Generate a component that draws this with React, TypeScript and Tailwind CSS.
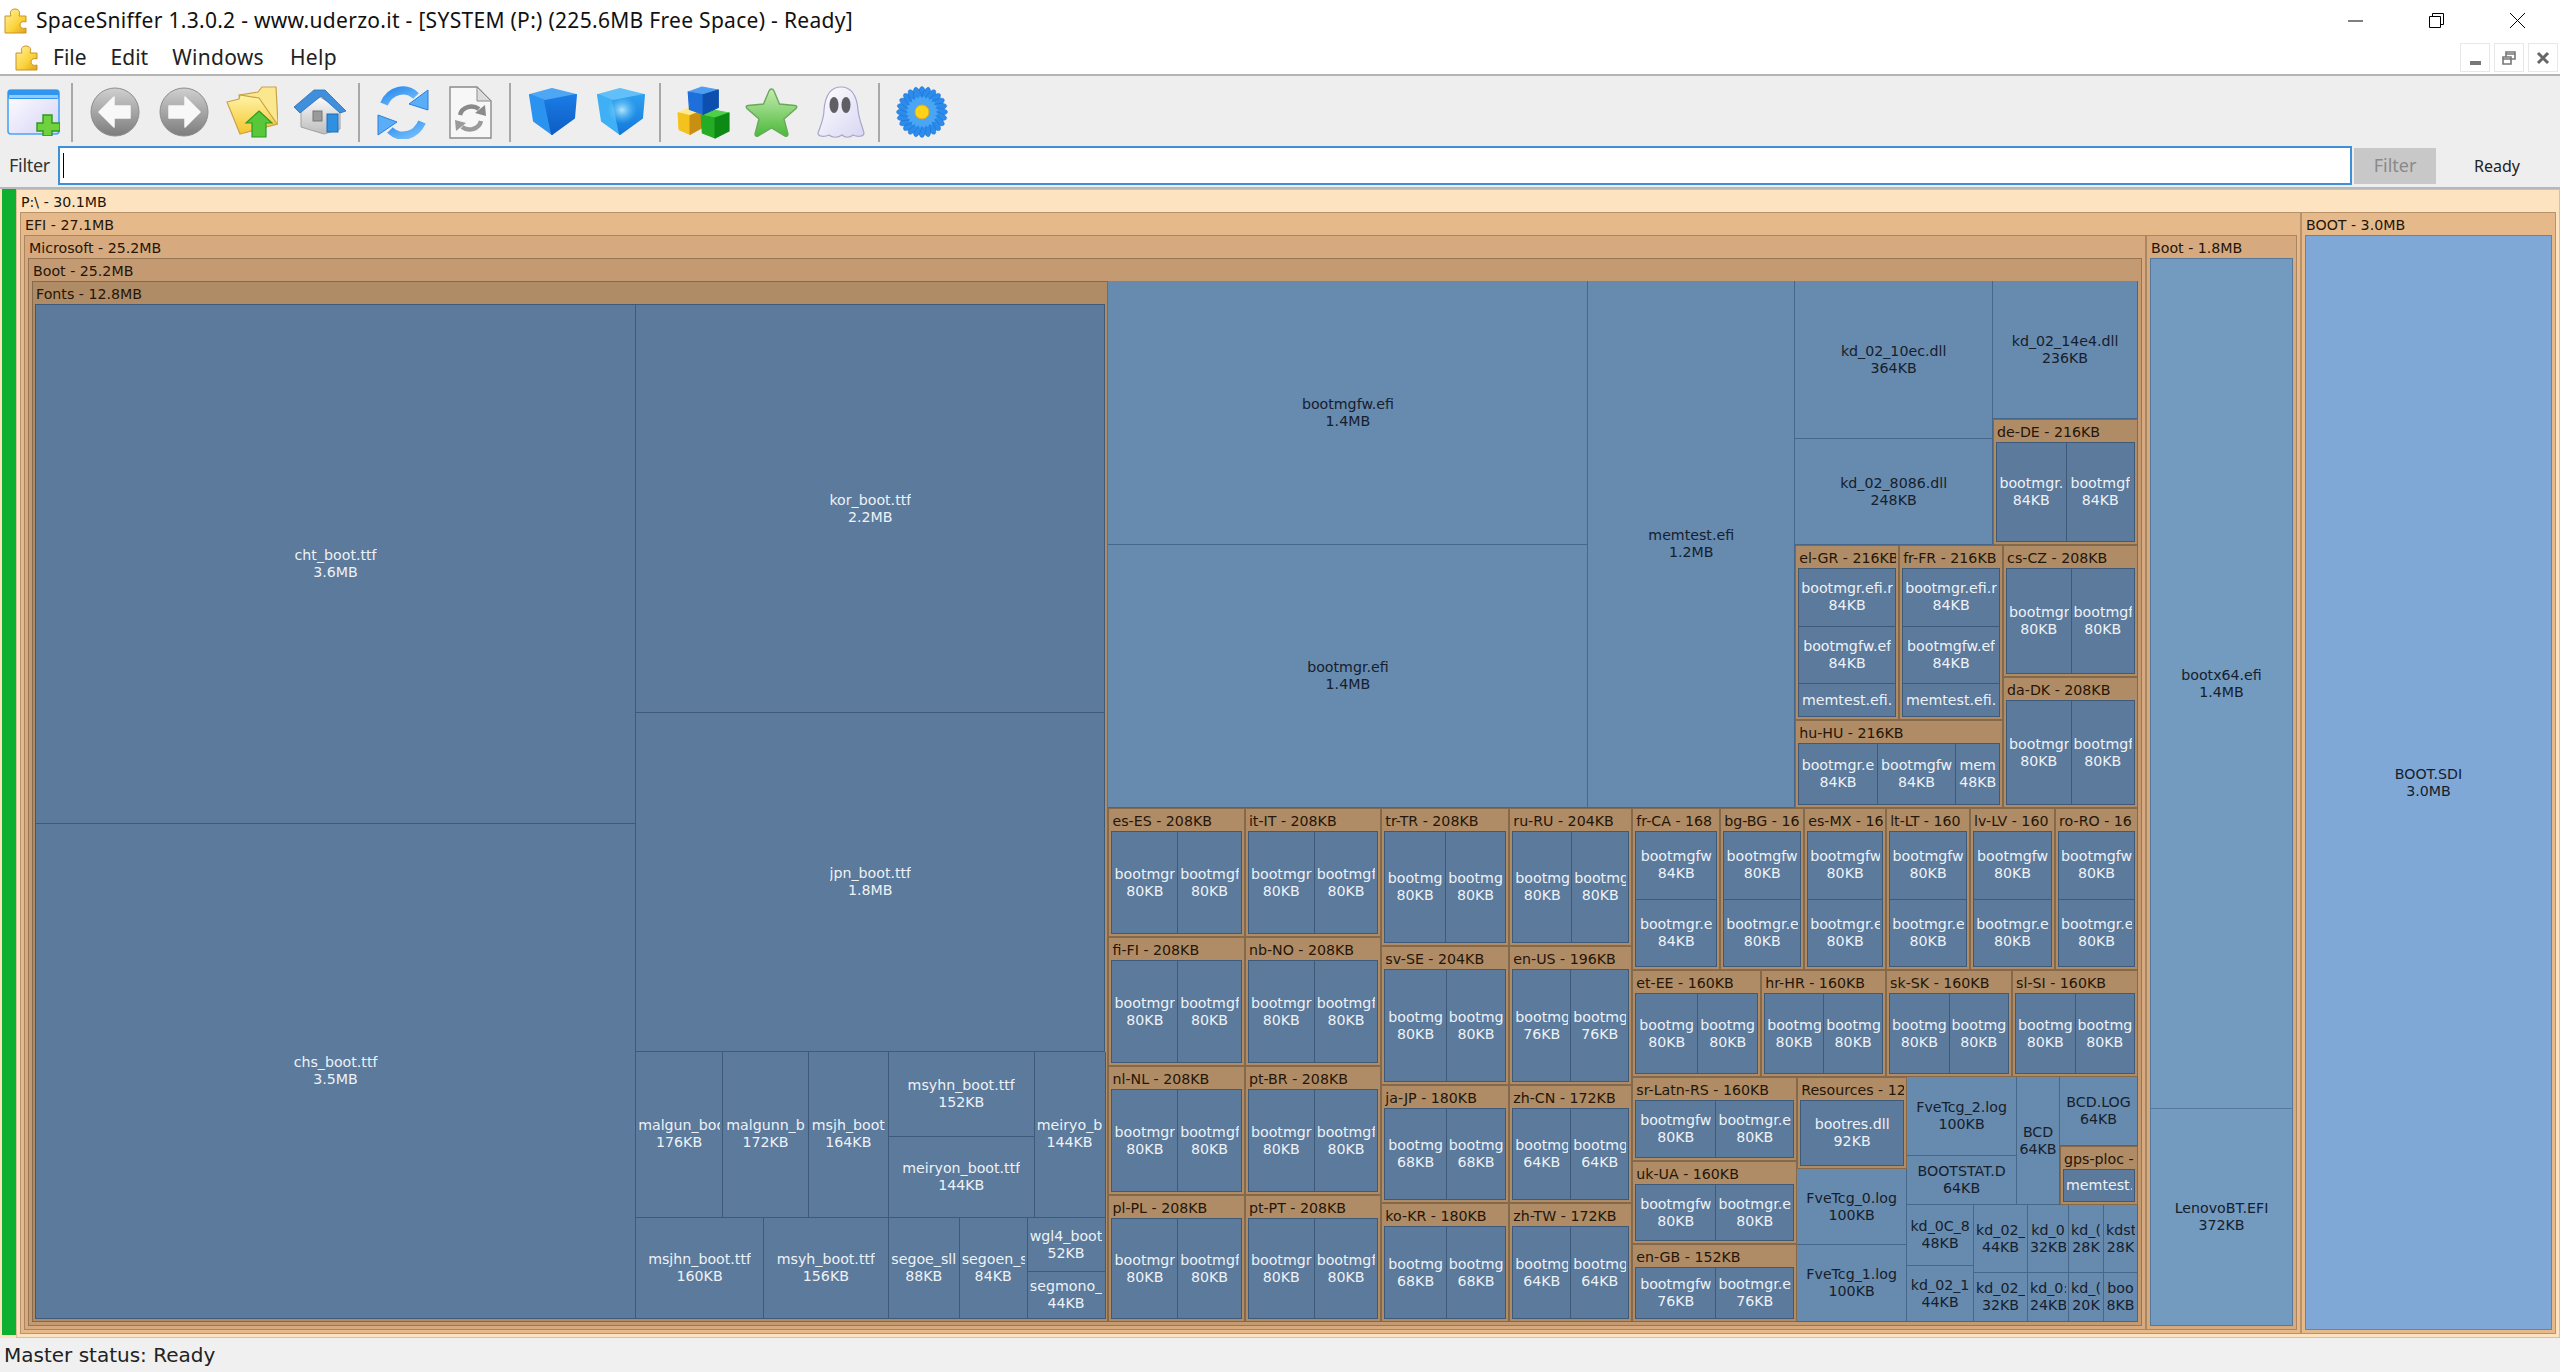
import { ReactNode } from "react"

// treemap data: weights are the pixel sizes read from the screenshot
type Leaf = { t: "l"; z: number; a: string; b?: string; tone: number }
type Folder = { t: "f"; z: number; label: string; depth: number; edge?: number; kid: TNode }
type Split = { t: "r" | "c"; z: number; kids: TNode[] }
type TNode = Leaf | Folder | Split

const r = (z: number, ...kids: TNode[]): TNode => ({ t: "r", z, kids })
const c = (z: number, ...kids: TNode[]): TNode => ({ t: "c", z, kids })
const l = (z: number, a: string, b?: string, tone = 0): TNode => ({ t: "l", z, a, b, tone })
const f = (z: number, label: string, kid: TNode, depth = 4, edge?: number): TNode => ({ t: "f", z, label, depth, kid, edge })

// two files side by side in a language folder
const loc = (z: number, label: string, w1: number, a1: string, b1: string, w2: number, a2: string, b2: string) =>
  f(z, label, r(1, l(w1, a1, b1), l(w2, a2, b2)), 4, 0)
// two files stacked
const locV = (z: number, label: string, a1: string, b1: string, a2: string, b2: string) =>
  f(z, label, c(1, l(68, a1, b1), l(68, a2, b2)), 4, 0)

const fonts = c(
  1,
  r(
    1,
    c(601, l(520, "cht_boot.ttf", "3.6MB"), l(495, "chs_boot.ttf", "3.5MB")),
    c(
      470,
      l(409, "kor_boot.ttf", "2.2MB"),
      l(339, "jpn_boot.ttf", "1.8MB"),
      r(
        167,
        l(87, "malgun_boot", "176KB"),
        l(86, "malgunn_b", "172KB"),
        l(80, "msjh_boot", "164KB"),
        c(146, l(86, "msyhn_boot.ttf", "152KB"), l(81, "meiryon_boot.ttf", "144KB")),
        l(71, "meiryo_b", "144KB")
      ),
      r(
        101,
        l(128, "msjhn_boot.ttf", "160KB"),
        l(125, "msyh_boot.ttf", "156KB"),
        l(71, "segoe_sll", "88KB"),
        l(68, "segoen_s", "84KB"),
        c(78, l(54, "wgl4_boot", "52KB"), l(47, "segmono_", "44KB"))
      )
    )
  )
)

const topRight = c(
  343,
  r(
    264,
    c(198, l(158, "kd_02_10ec.dll", "364KB", 1), l(106, "kd_02_8086.dll", "248KB", 1)),
    c(145, l(138, "kd_02_14e4.dll", "236KB", 1), loc(126, "de-DE - 216KB", 70, "bootmgr.", "84KB", 69, "bootmgf", "84KB"))
  ),
  r(
    263,
    c(
      208,
      r(
        175,
        f(104, "el-GR - 216KB", c(1, l(58, "bootmgr.efi.r", "84KB"), l(58, "bootmgfw.ef", "84KB"), l(33, "memtest.efi.")), 4, 0),
        f(104, "fr-FR - 216KB", c(1, l(58, "bootmgr.efi.r", "84KB"), l(58, "bootmgfw.ef", "84KB"), l(33, "memtest.efi.")), 4, 0)
      ),
      f(88, "hu-HU - 216KB", r(1, l(79, "bootmgr.e", "84KB"), l(79, "bootmgfw", "84KB"), l(44, "mem", "48KB")), 4, 0)
    ),
    c(
      135,
      loc(132, "cs-CZ - 208KB", 65, "bootmgr", "80KB", 64, "bootmgf", "80KB"),
      loc(131, "da-DK - 208KB", 65, "bootmgr", "80KB", 64, "bootmgf", "80KB")
    )
  )
)

const pair = (lab: string, w = 67) => loc(1, lab, w, "bootmgr", "80KB", 65, "bootmgf", "80KB")

const grid = r(
  514,
  c(
    273,
    r(129, pair("es-ES - 208KB"), pair("it-IT - 208KB")),
    r(129, pair("fi-FI - 208KB"), pair("nb-NO - 208KB")),
    r(129, pair("nl-NL - 208KB"), pair("pt-BR - 208KB")),
    r(127, pair("pl-PL - 208KB"), pair("pt-PT - 208KB"))
  ),
  c(
    251,
    r(
      138,
      loc(128, "tr-TR - 208KB", 60, "bootmg", "80KB", 60, "bootmg", "80KB"),
      loc(123, "ru-RU - 204KB", 60, "bootmg", "80KB", 58, "bootmg", "80KB")
    ),
    r(
      139,
      loc(128, "sv-SE - 204KB", 62, "bootmg", "80KB", 60, "bootmg", "80KB"),
      loc(123, "en-US - 196KB", 58, "bootmg", "76KB", 58, "bootmg", "76KB")
    ),
    r(
      118,
      loc(128, "ja-JP - 180KB", 62, "bootmg", "68KB", 60, "bootmg", "68KB"),
      loc(123, "zh-CN - 172KB", 58, "bootmg", "64KB", 58, "bootmg", "64KB")
    ),
    r(
      119,
      loc(128, "ko-KR - 180KB", 62, "bootmg", "68KB", 60, "bootmg", "68KB"),
      loc(123, "zh-TW - 172KB", 58, "bootmg", "64KB", 58, "bootmg", "64KB")
    )
  ),
  c(
    506,
    r(
      162,
      locV(88, "fr-CA - 168", "bootmgfw", "84KB", "bootmgr.e", "84KB"),
      locV(84, "bg-BG - 16", "bootmgfw", "80KB", "bootmgr.e", "80KB"),
      locV(82, "es-MX - 16", "bootmgfw", "80KB", "bootmgr.e", "80KB"),
      locV(84, "lt-LT - 160", "bootmgfw", "80KB", "bootmgr.e", "80KB"),
      locV(85, "lv-LV - 160", "bootmgfw", "80KB", "bootmgr.e", "80KB"),
      locV(83, "ro-RO - 16", "bootmgfw", "80KB", "bootmgr.e", "80KB")
    ),
    r(
      107,
      loc(129, "et-EE - 160KB", 62, "bootmg", "80KB", 60, "bootmg", "80KB"),
      loc(125, "hr-HR - 160KB", 60, "bootmg", "80KB", 60, "bootmg", "80KB"),
      loc(126, "sk-SK - 160KB", 60, "bootmg", "80KB", 60, "bootmg", "80KB"),
      loc(126, "sl-SI - 160KB", 60, "bootmg", "80KB", 60, "bootmg", "80KB")
    ),
    r(
      245,
      c(
        165,
        loc(84, "sr-Latn-RS - 160KB", 80, "bootmgfw", "80KB", 78, "bootmgr.e", "80KB"),
        loc(83, "uk-UA - 160KB", 80, "bootmgfw", "80KB", 78, "bootmgr.e", "80KB"),
        loc(78, "en-GB - 152KB", 80, "bootmgfw", "76KB", 78, "bootmgr.e", "76KB")
      ),
      c(
        110,
        f(92, "Resources - 12", c(1, l(1, "bootres.dll", "92KB")), 4, 0),
        l(76, "FveTcg_0.log", "100KB", 1),
        l(77, "FveTcg_1.log", "100KB", 1)
      ),
      c(
        231,
        r(
          128,
          c(110, l(79, "FveTcg_2.log", "100KB", 1), l(49, "BOOTSTAT.D", "64KB", 1)),
          l(43, "BCD", "64KB", 1),
          c(78, l(69, "BCD.LOG", "64KB", 1), f(59, "gps-ploc -", c(1, l(1, "memtest.")), 4, 0))
        ),
        r(
          117,
          c(67, l(61, "kd_0C_8", "48KB", 1), l(56, "kd_02_1", "44KB", 1)),
          c(54, l(68, "kd_02_", "44KB", 1), l(49, "kd_02_", "32KB", 1)),
          c(41, l(68, "kd_0", "32KB", 1), l(49, "kd_0:", "24KB", 1)),
          c(35, l(68, "kd_(", "28K", 1), l(49, "kd_(", "20K", 1)),
          c(34, l(68, "kdst", "28K", 1), l(49, "boo", "8KB", 1))
        )
      )
    )
  )
)

const tree = f(
  1,
  "P:\\ - 30.1MB",
  r(
    1,
    f(
      2281,
      "EFI - 27.1MB",
      r(
        1,
        f(
          2122,
          "Microsoft - 25.2MB",
          f(
            1,
            "Boot - 25.2MB",
            r(
              1,
              f(1077, "Fonts - 12.8MB", fonts, 4, 0),
              c(
                1030,
                r(
                  527,
                  c(480, l(264, "bootmgfw.efi", "1.4MB", 1), l(263, "bootmgr.efi", "1.4MB", 1)),
                  l(207, "memtest.efi", "1.2MB", 1),
                  topRight
                ),
                grid
              )
            ),
            3
          ),
          2
        ),
        f(151, "Boot - 1.8MB", c(1, l(851, "bootx64.efi", "1.4MB", 2), l(217, "LenovoBT.EFI", "372KB", 2)), 2, 2)
      ),
      1
    ),
    f(255, "BOOT - 3.0MB", c(1, l(1, "BOOT.SDI", "3.0MB", 3)), 1, 3)
  ),
  0
)

const folderTone = [
  "bg-[#fde3c0] border-[#dcbf98]",
  "bg-[#e6b98b] border-[#b8926a]",
  "bg-[#d6a97e] border-[#a98560]",
  "bg-[#c49a72] border-[#977655]",
  "bg-[#b08c66] border-[#85694b]",
]
const leafTone = [
  "bg-[#5b7a9c] border-[#3f5a78] text-[#eef2f7]",
  "bg-[#678aaf] border-[#47678a] text-[#16202c]",
  "bg-[#739abf] border-[#55789c] text-[#16202c]",
  "bg-[#80a8d6] border-[#5f86b0] text-[#16202c]",
]
const edgeTone = ["border-[#3f5a78]", "", "border-[#55789c]", "border-[#5f86b0]"]

function Node({ n }: { n: TNode }): ReactNode {
  const flex = { flex: `${n.z} 1 0px` }
  if (n.t === "r" || n.t === "c") {
    return (
      <div className={n.t === "r" ? "flex min-h-0 min-w-0" : "flex flex-col min-h-0 min-w-0"} style={flex}>
        {n.kids.map((k, i) => (
          <Node key={i} n={k} />
        ))}
      </div>
    )
  }
  if (n.t === "l") {
    return (
      <div className="flex min-h-0 min-w-0" style={flex}>
        <div
          className={`flex flex-1 min-w-0 flex-col items-center justify-center overflow-hidden border-r border-b whitespace-nowrap px-[2px] text-[14.2px] leading-[17px] ${leafTone[n.tone]}`}
        >
          <span className="block max-w-full overflow-hidden">{n.a}</span>
          {n.b && <span className="block max-w-full overflow-hidden">{n.b}</span>}
        </div>
      </div>
    )
  }
  return (
    <div className="flex min-h-0 min-w-0" style={flex}>
      <div className={`flex flex-1 min-w-0 flex-col border ${n.depth === 4 ? "px-[2px] pb-[2px]" : "px-[3px] pb-[3px]"} ${folderTone[n.depth]}`}>
        <div className="h-[22px] shrink-0 overflow-hidden whitespace-nowrap pl-[1px] text-[14.2px] leading-[24px] text-[#241608]">
          {n.label}
        </div>
        <div className={`flex flex-1 min-h-0 min-w-0 ${n.edge !== undefined && edgeTone[n.edge] ? `border-l border-t ${edgeTone[n.edge]}` : ""}`}>
          <Node n={n.kid} />
        </div>
      </div>
    </div>
  )
}

function Puzzle({ className, id }: { className: string; id: string }) {
  return (
    <svg viewBox="0 0 25 26" className={className}>
      <defs>
        <linearGradient id={id} x1="0" y1="0" x2="1" y2="1">
          <stop offset="0" stopColor="#fff3a0" />
          <stop offset="0.6" stopColor="#fbd23a" />
          <stop offset="1" stopColor="#e0a020" />
        </linearGradient>
      </defs>
      <path
        d="M2 8 H8 C6 3 9 1 12 1 C15 1 18 3 16 8 H23 V14 C20 13 17 14 17 17 C17 20 20 21 23 20 V25 H2 Z"
        fill={`url(#${id})`}
        stroke="#c8922a"
        strokeLinejoin="round"
      />
    </svg>
  )
}

function IconNew() {
  return (
    <svg viewBox="0 0 53 47" className="h-[47px] w-[53px] shrink-0">
      <defs>
        <linearGradient id="nw" x1="0" y1="0" x2="1" y2="1">
          <stop offset="0" stopColor="#ffffff" />
          <stop offset="1" stopColor="#d6d2f6" />
        </linearGradient>
      </defs>
      <rect x="1" y="1" width="51" height="44" rx="3" fill="url(#nw)" stroke="#49a5f5" strokeWidth="1.6" />
      <rect x="1" y="1" width="51" height="9" rx="2" fill="#2f95ee" />
      <rect x="2" y="6" width="49" height="3" fill="#8ecbfa" />
      <path d="M36 26 H45 V34 H53 V42 H45 V47 H36 V42 H30 V34 H36 Z" fill="#6fd040" stroke="#2b9a1e" strokeWidth="1.4" />
    </svg>
  )
}

function IconNav({ flip, id }: { flip?: boolean; id: string }) {
  return (
    <svg viewBox="0 0 50 50" className="h-[50px] w-[50px] shrink-0">
      <defs>
        <linearGradient id={id} x1="0" y1="0" x2="0" y2="1">
          <stop offset="0" stopColor="#d0d0d0" />
          <stop offset="1" stopColor="#7c7c7c" />
        </linearGradient>
      </defs>
      <circle cx="25" cy="25" r="24" fill={`url(#${id})`} stroke="#8e8e8e" />
      <path
        d={flip ? "M26 10 L41 25 L26 40 L26 31 L10 31 L10 19 L26 19 Z" : "M24 10 L9 25 L24 40 L24 31 L40 31 L40 19 L24 19 Z"}
        fill="#f8f8f8"
        stroke="#f8f8f8"
        strokeWidth="1.5"
        strokeLinejoin="round"
      />
    </svg>
  )
}

function IconFolderUp() {
  return (
    <svg viewBox="0 0 52 52" className="ml-[17px] h-[52px] w-[52px] shrink-0">
      <defs>
        <linearGradient id="fo" x1="0" y1="0" x2="0" y2="1">
          <stop offset="0" stopColor="#fff4a8" />
          <stop offset="1" stopColor="#f5c52e" />
        </linearGradient>
      </defs>
      <path d="M13 9 L32 6 L36 1 L50 1 L52 38 L20 46 Z" fill="#fbe88e" stroke="#c9a24a" strokeWidth="1.2" />
      <path d="M1 16 L13 13 L14 9 L33 12 L51 38 L14 48 Z" fill="url(#fo)" stroke="#c9a24a" strokeWidth="1.2" />
      <path d="M33 25 L46 37 L40 37 L40 51 L26 51 L26 37 L20 37 Z" fill="#58c83a" stroke="#2f9a26" strokeWidth="1.2" />
    </svg>
  )
}

function IconHome() {
  return (
    <svg viewBox="0 0 52 46" className="ml-[16px] h-[46px] w-[52px] shrink-0">
      <defs>
        <linearGradient id="hm" x1="0" y1="0" x2="0" y2="1">
          <stop offset="0" stopColor="#fafafa" />
          <stop offset="1" stopColor="#bdbdbd" />
        </linearGradient>
      </defs>
      <path d="M7 20 L26 8 L46 20 L46 40 L30 45 L7 38 Z" fill="url(#hm)" stroke="#a0a0a0" />
      <path d="M0 18 L20 1 L31 1 L52 22 L46 24 L27 7 L6 24 Z" fill="#3f8fdc" stroke="#2a6eb8" strokeWidth="0.8" />
      <rect x="19" y="22" width="9" height="10" fill="#9a9a9a" stroke="#777" />
      <rect x="33" y="25" width="11" height="18" fill="#2f8fe0" stroke="#1f6cb8" />
    </svg>
  )
}

function IconRefresh() {
  return (
    <svg viewBox="0 0 54 53" className="ml-[16px] h-[53px] w-[54px] shrink-0">
      <defs>
        <linearGradient id="rf" x1="0" y1="0" x2="1" y2="1">
          <stop offset="0" stopColor="#2a8bf0" />
          <stop offset="1" stopColor="#79c2fa" />
        </linearGradient>
      </defs>
      <path d="M8 18 C14 4 30 0 40 10" fill="none" stroke="url(#rf)" strokeWidth="8" />
      <path d="M33 18 L52 24 L52 4 Z" fill="#5aaef7" stroke="#2a80dd" strokeWidth="1" strokeLinejoin="round" />
      <path d="M46 36 C40 50 24 54 14 44" fill="none" stroke="url(#rf)" strokeWidth="8" />
      <path d="M21 36 L2 29 L2 49 Z" fill="#5aaef7" stroke="#2a80dd" strokeWidth="1" strokeLinejoin="round" />
    </svg>
  )
}

function IconDoc() {
  return (
    <svg viewBox="0 0 43 53" className="ml-[19px] h-[53px] w-[43px] shrink-0">
      <path d="M1 1 H28 L42 15 V52 H1 Z" fill="#f7f7f7" stroke="#8c8c8c" strokeWidth="1.4" />
      <path d="M28 1 V15 H42 Z" fill="#dcdcdc" stroke="#8c8c8c" />
      <path d="M11 29 C13 21 23 18 30 23" fill="none" stroke="#8a8a8a" strokeWidth="4.5" />
      <path d="M26 27 L37 30 L36 19 Z" fill="#8a8a8a" />
      <path d="M32 35 C30 43 20 46 13 41" fill="none" stroke="#9a9a9a" strokeWidth="4.5" />
      <path d="M17 37 L6 34 L7 45 Z" fill="#9a9a9a" />
    </svg>
  )
}

function IconCube({ id, shiny }: { id: string; shiny?: boolean }) {
  return (
    <svg viewBox="0 0 50 50" className="h-[50px] w-[50px] shrink-0">
      <defs>
        <linearGradient id={id} x1="0" y1="0" x2="0" y2="1">
          <stop offset="0" stopColor={shiny ? "#2fa0f0" : "#1a7ce6"} />
          <stop offset="1" stopColor={shiny ? "#1278da" : "#0e5dc2"} />
        </linearGradient>
        <radialGradient id={`${id}g`}>
          <stop offset="0" stopColor="#c4f0fe" stopOpacity="0.9" />
          <stop offset="1" stopColor="#5cc4f8" stopOpacity="0" />
        </radialGradient>
      </defs>
      <g strokeLinejoin="round" strokeWidth="2">
        <path d="M2 8 L24 2 L48 8 L17 14 Z" fill={shiny ? "#62c0f8" : "#4fa6f5"} stroke={shiny ? "#62c0f8" : "#4fa6f5"} />
        <path d="M2 8 L17 14 L24 47 L6 34 Z" fill={shiny ? "#3fb0f6" : "#2c92f0"} stroke={shiny ? "#3fb0f6" : "#2c92f0"} />
        <path d="M17 14 L48 8 L46 31 L24 47 Z" fill={`url(#${id})`} stroke={`url(#${id})`} />
      </g>
      {shiny && <ellipse cx="26" cy="23" rx="15" ry="14" fill={`url(#${id}g)`} />}
    </svg>
  )
}

function IconBlocks() {
  const block = (tr: string, top: string, left: string, right: string) => (
    <g transform={tr} strokeLinejoin="round">
      <path d="M1 6 L12 1 L25 4 L13 9 Z" fill={top} stroke={top} />
      <path d="M1 6 L13 9 L13 29 L2 24 Z" fill={left} stroke={left} />
      <path d="M13 9 L25 4 L25 22 L13 29 Z" fill={right} stroke={right} />
    </g>
  )
  return (
    <svg viewBox="0 0 53 53" className="ml-[16px] h-[53px] w-[53px] shrink-0">
      {block("translate(0 21) scale(1 0.95)", "#ffe98a", "#f4c21e", "#c98f12")}
      {block("translate(23 23) scale(1.16 1)", "#4fd04a", "#24ad24", "#0d8a16")}
      {block("translate(10 0) scale(1.25 0.98)", "#4f9df0", "#1f6fdb", "#0d4fae")}
    </svg>
  )
}

function IconStar() {
  return (
    <svg viewBox="0 0 53 51" className="ml-[15px] h-[51px] w-[53px] shrink-0">
      <defs>
        <linearGradient id="st" x1="0" y1="0" x2="0" y2="1">
          <stop offset="0" stopColor="#c4ecb0" />
          <stop offset="1" stopColor="#4cb93a" />
        </linearGradient>
      </defs>
      <path
        d="M26.5 2 Q28 2 29 4 L34.5 17 L50 18.5 Q53 19 51 21.5 L39 32 L43 47 Q43 50 40 49 L26.5 41 L13 49 Q10 50 10 47 L14 32 L2 21.5 Q0 19 3 18.5 L18.5 17 L24 4 Q25 2 26.5 2 Z"
        fill="url(#st)"
        stroke="#6aa85a"
        strokeWidth="1.4"
      />
    </svg>
  )
}

function IconGhost() {
  return (
    <svg viewBox="0 0 48 53" className="ml-[19px] h-[53px] w-[48px] shrink-0">
      <defs>
        <linearGradient id="gh" x1="0" y1="0" x2="1" y2="1">
          <stop offset="0" stopColor="#ffffff" />
          <stop offset="1" stopColor="#d8d6f2" />
        </linearGradient>
      </defs>
      <path
        d="M24 1 C36 1 40 12 41 24 C42 34 46 42 47 47 C47 51 40 51 36 49 C33 52 28 52 25 49 C21 52 15 52 12 49 C8 51 1 51 1 47 C3 41 7 33 7 24 C8 12 12 1 24 1 Z"
        fill="url(#gh)"
        stroke="#a9a5cc"
        strokeWidth="1.2"
      />
      <ellipse cx="17" cy="19" rx="4.5" ry="8" fill="#5e5e64" />
      <ellipse cx="29" cy="19" rx="4.5" ry="8" fill="#5e5e64" />
    </svg>
  )
}

function IconFlower() {
  const petals = Array.from({ length: 24 }, (_, i) => (i * 360) / 24)
  return (
    <svg viewBox="0 0 52 52" className="ml-[16px] h-[52px] w-[52px] shrink-0">
      {petals.map((a) => (
        <ellipse key={a} cx="26" cy="12.5" rx="4.2" ry="12" fill="#2c8cec" stroke="#1a6cd0" strokeWidth="0.5" transform={`rotate(${a} 26 26)`} />
      ))}
      {petals.map((a) => (
        <ellipse key={a} cx="26" cy="18" rx="2.6" ry="8" fill="#4aa6f4" transform={`rotate(${a + 7.5} 26 26)`} />
      ))}
      <circle cx="26" cy="26" r="7" fill="#ffd21c" stroke="#e8a810" />
    </svg>
  )
}

const Sep = ({ className }: { className: string }) => <div className={`h-[59px] w-[2px] shrink-0 bg-[#a8a8a8] ${className}`} />

export default function App() {
  return (
    <div className="flex h-[1372px] w-[2560px] flex-col overflow-hidden bg-white font-['Noto_Sans',sans-serif] text-black">
      {/* title bar */}
      <div className="flex h-[41px] shrink-0 items-center">
        <Puzzle id="pz1" className="ml-[3px] h-[26px] w-[25px] shrink-0" />
        <span className="ml-[8px] whitespace-nowrap text-[21px] tracking-[0.3px] text-[#111]">
          SpaceSniffer 1.3.0.2 - www.uderzo.it - [SYSTEM (P:) (225.6MB Free Space) - Ready]
        </span>
        <div className="ml-auto flex items-center pr-[35px]">
          <svg viewBox="0 0 15 15" className="h-[15px] w-[15px]">
            <path d="M0 8 H15" stroke="#000" />
          </svg>
          <svg viewBox="0 0 15 15" className="ml-[66px] h-[15px] w-[15px]">
            <path d="M0.5 3.5 H11.5 V14.5 H0.5 Z M3.5 3.5 V0.5 H14.5 V11.5 H11.5" fill="none" stroke="#000" />
          </svg>
          <svg viewBox="0 0 15 15" className="ml-[66px] h-[15px] w-[15px]">
            <path d="M0 0 L15 15 M15 0 L0 15" stroke="#000" />
          </svg>
        </div>
      </div>

      {/* menu bar */}
      <div className="flex h-[35px] shrink-0 items-center border-b-2 border-[#b4b4b4] text-[21px] text-[#222]">
        <Puzzle id="pz2" className="ml-[14px] h-[26px] w-[25px] shrink-0" />
        <span className="ml-[14px]">File</span>
        <span className="ml-[24px]">Edit</span>
        <span className="ml-[24px] tracking-[0.3px]">Windows</span>
        <span className="ml-[26px] tracking-[0.3px]">Help</span>
        <div className="ml-auto flex gap-[4px] pr-[2px]">
          <div className="flex h-[29px] w-[30px] items-end justify-center border border-[#e8e8e8] pb-[6px]">
            <div className="h-[4px] w-[11px] bg-[#777]" />
          </div>
          <div className="flex h-[29px] w-[30px] items-center justify-center border border-[#e8e8e8]">
            <svg viewBox="0 0 14 14" className="h-[14px] w-[14px]">
              <path d="M1 6 H9 V13 H1 Z M4 6 V1 H13 V8 H9 M1 8 H9 M4 3 H13" fill="none" stroke="#777" strokeWidth="1.6" />
            </svg>
          </div>
          <div className="flex h-[29px] w-[30px] items-center justify-center border border-[#e8e8e8]">
            <svg viewBox="0 0 14 14" className="h-[14px] w-[14px]">
              <path d="M2 2 L12 12 M12 2 L2 12" stroke="#666" strokeWidth="3" />
            </svg>
          </div>
        </div>
      </div>

      {/* toolbar */}
      <div className="flex h-[70px] shrink-0 items-center bg-[#eeeeee] pl-[7px] pt-[2px]">
        <IconNew />
        <Sep className="ml-[11px]" />
        <div className="ml-[17px] flex">
          <IconNav id="nb" />
        </div>
        <div className="ml-[19px] flex">
          <IconNav id="nf" flip />
        </div>
        <IconFolderUp />
        <IconHome />
        <Sep className="ml-[12px]" />
        <IconRefresh />
        <IconDoc />
        <Sep className="ml-[17px]" />
        <div className="ml-[17px] flex">
          <IconCube id="c1" />
        </div>
        <div className="ml-[18px] flex">
          <IconCube id="c2" shiny />
        </div>
        <Sep className="ml-[13px]" />
        <IconBlocks />
        <IconStar />
        <IconGhost />
        <Sep className="ml-[13px]" />
        <IconFlower />
      </div>

      {/* filter row */}
      <div className="flex h-[43px] shrink-0 flex-col bg-[#eeeeee] border-b-2 border-[#b8b8b8]">
        <div className="flex h-[39px] items-center">
          <span className="ml-[9px] w-[49px] text-[18px] tracking-[-0.3px] text-[#333]">Filter</span>
          <div className="flex h-[39px] w-[2294px] items-center border-2 border-[#3d8fd6] bg-white pl-[3px]">
            <div className="h-[25px] w-[1px] bg-black" />
          </div>
          <div className="ml-[2px] flex h-[36px] w-[82px] items-center justify-center bg-[#c8c8c8] text-[18px] text-[#8a8a8a]">Filter</div>
          <span className="ml-[38px] text-[16px] text-[#222]">Ready</span>
        </div>
      </div>

      {/* treemap */}
      <div className="flex min-h-0 flex-1 bg-[#fde3c0] font-['DejaVu_Sans',sans-serif]">
        <div className="ml-[2px] mb-[3px] w-[14px] shrink-0 bg-[#0fb030]" />
        <Node n={tree} />
      </div>

      {/* status bar */}
      <div className="flex h-[34px] shrink-0 items-center bg-[#f0f0f0] pl-[4px] font-['DejaVu_Sans',sans-serif] text-[20px] text-[#222]">
        Master status: Ready
      </div>
    </div>
  )
}
